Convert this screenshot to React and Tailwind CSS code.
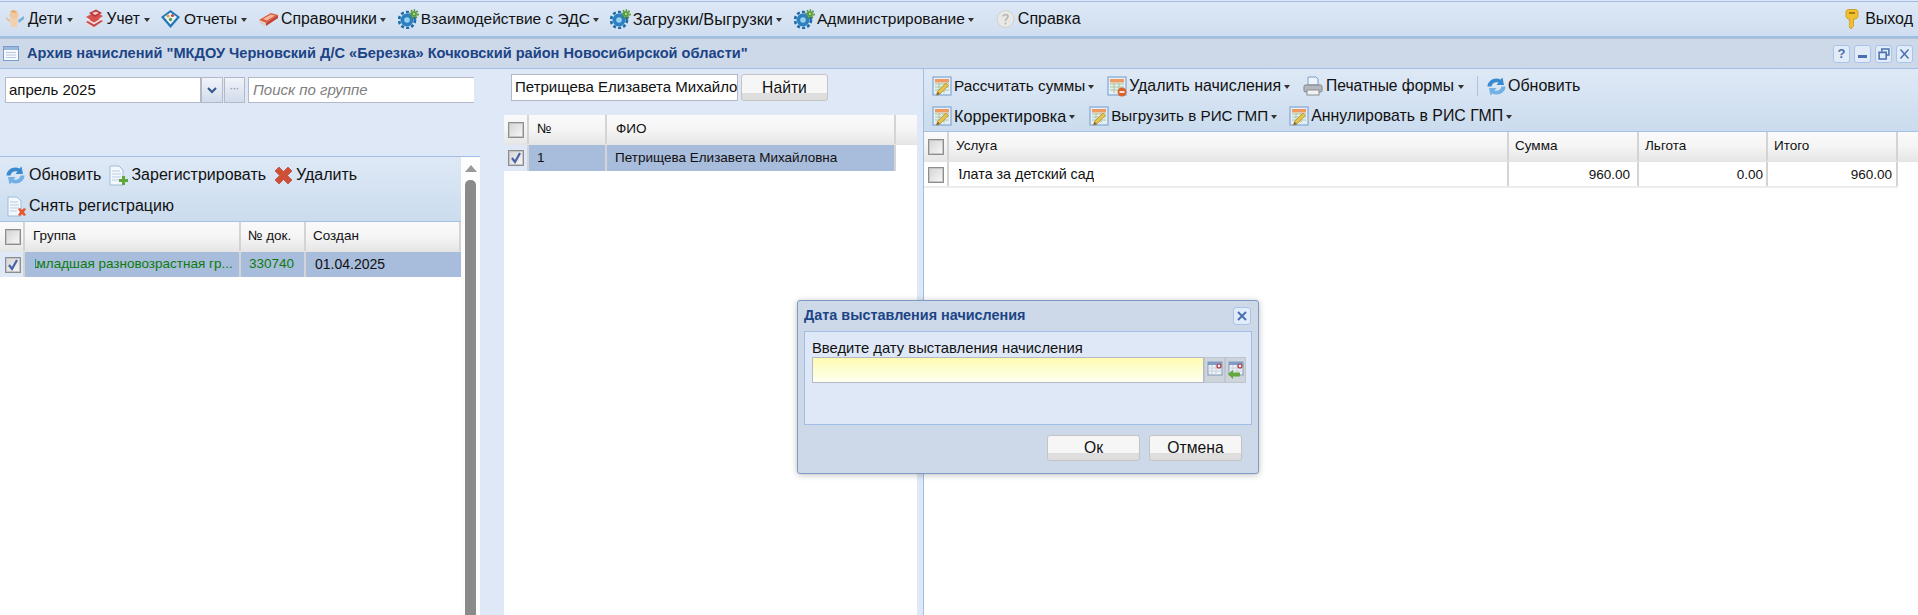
const font = { fontFamily: '"Liberation Sans", Arial, sans-serif' };

// --- icons ---
function KidIcon() {
  return (
    <svg width="20" height="20" viewBox="0 0 20 20" className="shrink-0">
      <circle cx="9" cy="6" r="4.5" fill="#f0c8a0" />
      <path d="M5 2.5 L8 1 L12 2.5 L10 4 Z" fill="#e8a868" />
      <path d="M5 11 C6 9 12 9 13 11 L12 18 L6 18 Z" fill="#f2cfae" />
      <path d="M13 11 L19 7 L19 10 L14 14 Z" fill="#7fb0dc" />
      <path d="M1 8 L5 11 L5 13 L1 10 Z" fill="#e5b98f" />
    </svg>
  );
}
function BooksIcon() {
  return (
    <svg width="20" height="20" viewBox="0 0 20 20" className="shrink-0">
      <path d="M2 13 L11 8 L19 12 L10 18 Z" fill="#c84848" />
      <path d="M2 14 L10 18.5 L10 20 L2 16 Z" fill="#f0d8d8" />
      <path d="M2 8 L11 3 L19 7 L10 13 Z" fill="#d85050" />
      <path d="M2 9 L10 13.5 L19 8 L19 10 L10 15.5 L2 11 Z" fill="#f3e0e0" />
      <path d="M5 4 L12 0.5 L18 4 L11 8 Z" fill="#b83838" />
      <path d="M8 4 L12 2.5 L15 4 L11 6 Z" fill="#f4c8c8" />
    </svg>
  );
}
function ReportIcon() {
  return (
    <svg width="21" height="20" viewBox="0 0 21 20" className="shrink-0">
      <path d="M10.5 1 L20 8 L10.5 19 L1 8 Z" fill="#1f78b8" />
      <path d="M10.5 3.5 L17 8 L10.5 15.5 L4 8 Z" fill="#eef4fa" />
      <circle cx="8" cy="7" r="1.6" fill="#d8a030" />
      <circle cx="12.5" cy="6.5" r="1.6" fill="#c04848" />
      <circle cx="10.5" cy="10.5" r="1.7" fill="#58a048" />
    </svg>
  );
}
function HandbookIcon() {
  return (
    <svg width="21" height="20" viewBox="0 0 21 20" className="shrink-0">
      <path d="M1 11 L13 4 L20 6 L8 14 Z" fill="#e05a3c" />
      <path d="M5 10 L13 5.5 L17 6.5 L9 11.5 Z" fill="#f5b8a0" />
      <path d="M1 11 L8 14 L8 17 L1 14 Z" fill="#d8d0c8" />
      <path d="M8 14 L20 6 L20 9 L8 17 Z" fill="#c04030" />
    </svg>
  );
}
function GearIcon() {
  return (
    <svg width="21" height="20" viewBox="0 0 21 20" className="shrink-0">
      <circle cx="9" cy="11" r="6.5" fill="#2a80c0" />
      <circle cx="9" cy="11" r="8" fill="none" stroke="#1d6aa8" strokeWidth="2.6" strokeDasharray="3 2.2" />
      <circle cx="9" cy="11" r="2.8" fill="#9ad0ee" />
      <circle cx="16" cy="5" r="3" fill="#5c9e3c" />
      <circle cx="16" cy="5" r="4" fill="none" stroke="#4c8c30" strokeWidth="1.6" strokeDasharray="1.6 1.4" />
      <circle cx="16" cy="5" r="1.1" fill="#c8e4a8" />
    </svg>
  );
}
function HelpIcon() {
  return (
    <svg width="21" height="20" viewBox="0 0 21 20" className="shrink-0">
      <circle cx="10.5" cy="10" r="8.5" fill="#e8e8e6" stroke="#d0d0cc" />
      <path d="M8 7.5 C8 5 13 5 13 7.5 C13 9.5 10.5 9.5 10.5 12" fill="none" stroke="#b8b8b4" strokeWidth="1.7" />
      <circle cx="10.5" cy="14.5" r="1.1" fill="#b8b8b4" />
    </svg>
  );
}
function KeyIcon() {
  return (
    <svg width="14" height="21" viewBox="0 0 14 21" className="shrink-0">
      <path d="M1 2 L3 0.5 L11 0.5 L13 2 L13 8 L11 10 L8.5 10 L8.5 17 L6 20 L4 18 L5 16.5 L4 15 L5 13.5 L4 12 L5 10 L3 10 L1 8 Z" fill="#f0c030" stroke="#c89818" strokeWidth="0.8" />
      <rect x="4" y="3" width="6" height="2" fill="#a87c10" />
    </svg>
  );
}
function RefreshIcon() {
  return (
    <svg width="19" height="19" viewBox="0 0 19 19" className="shrink-0">
      <path d="M0.5 9.5 C0.5 3.5 8 -0.5 13.5 2.5 L15.5 0.5 L17 8 L9.5 8 L11.5 5.5 C8.5 4.5 5 6 4.5 9.5 Z" fill="#3a8ad0" />
      <path d="M18.5 9.5 C18.5 15.5 11 19.5 5.5 16.5 L3.5 18.5 L2 11 L9.5 11 L7.5 13.5 C10.5 14.5 14 13 14.5 9.5 Z" fill="#72b0e6" />
    </svg>
  );
}
function CalcIcon({ badge }) {
  return (
    <svg width="20" height="21" viewBox="0 0 20 21" className="shrink-0">
      <rect x="1" y="1" width="18" height="18" fill="#e6eef8" stroke="#8fb0d8" strokeWidth="1.4" />
      <rect x="3" y="3" width="14" height="3.5" fill="#ee9a60" />
      <path d="M3 8 H17 M3 11 H17 M3 14 H17 M7 7 V17 M12 7 V17" stroke="#a8c898" />
      {badge ? (
        <g>
          <circle cx="15" cy="16" r="4.5" fill="#d8642c" />
          <rect x="12.5" y="15.2" width="5" height="1.6" fill="#fff" />
        </g>
      ) : (
        <g>
          <path d="M5.5 15.5 L14 7 L16.5 9.5 L8 18 L4.5 19 Z" fill="#e6c24c" stroke="#a08628" strokeWidth="0.6" />
          <path d="M4.5 19.5 L5.5 15.5 L8 18 Z" fill="#8a6a30" />
        </g>
      )}
    </svg>
  );
}
function PrinterIcon() {
  return (
    <svg width="20" height="20" viewBox="0 0 20 20" className="shrink-0">
      <path d="M5 1 H13 L15 3 V9 H5 Z" fill="#eef4fb" stroke="#7c9cc4" />
      <rect x="1" y="9" width="18" height="7" rx="1.5" fill="#b4b8be" stroke="#7f8388" />
      <rect x="4" y="14" width="12" height="5" fill="#f2f2f2" stroke="#8a8e94" />
    </svg>
  );
}
function DocIcon({ plus }) {
  return (
    <svg width="21" height="21" viewBox="0 0 21 21" className="shrink-0">
      <path d="M2 1 H11 L15 5 V20 H2 Z" fill="#f4f8fc" stroke="#9cbcdc" />
      <path d="M4 6 H12 M4 9 H13 M4 12 H13 M4 15 H11" stroke="#b8cce0" />
      {plus ? (
        <path d="M14 11 H17 V14 H20 V17 H17 V20 H14 V17 H11 V14 H14 Z" fill="#5ca83c" />
      ) : (
        <path d="M12 13 L14 12 L16 14 L18 12 L20 13 L18 16 L20 19 L18 20 L16 18 L14 20 L12 19 L14 16 Z" fill="#e8542c" />
      )}
    </svg>
  );
}
function DeleteIcon() {
  return (
    <svg width="19" height="19" viewBox="0 0 19 19" className="shrink-0">
      <path d="M1 5 L5 1 L9.5 5.5 L14 1 L18 5 L13.5 9.5 L18 14 L14 18 L9.5 13.5 L5 18 L1 14 L5.5 9.5 Z" fill="#cf4f37" stroke="#b03c28" strokeWidth="0.6" />
    </svg>
  );
}
function WindowIcon() {
  return (
    <svg width="16" height="15" viewBox="0 0 16 15" className="shrink-0">
      <rect x="0.5" y="0.5" width="15" height="14" fill="#f6f9fd" stroke="#7e9cc8" />
      <rect x="1" y="1" width="14" height="3" fill="#9ab8de" />
      <path d="M3 6.5 H13 M3 9 H13 M3 11.5 H13" stroke="#b8c8dc" />
    </svg>
  );
}
function CalIcon({ arrow }) {
  return (
    <svg width="18" height="20" viewBox="0 0 18 20">
      <rect x="2" y="2" width="14" height="13" fill="#eef2f8" stroke="#8098b8" />
      <rect x="2" y="2" width="14" height="3" fill="#7f9cc4" />
      <path d="M2 8 H16 M2 11 H16 M6 5 V15 M10 5 V15" stroke="#c8d0dc" />
      <circle cx="13" cy="6" r="2" fill="#f4f4f4" stroke="#b03038" strokeWidth="1.2" />
      {arrow && <path d="M1 14 L6 10 L6 12.5 L13 12.5 L13 16.5 L6 16.5 L6 19 Z" fill="#62a83c" />}
    </svg>
  );
}

// --- small parts ---
function Caret() {
  return <span className="ml-[3px] mt-[1px] w-0 h-0 border-x-[3.5px] border-x-transparent border-t-[4px] border-t-[#333]" />;
}
function Tool({ icon, label, caret, size = "text-[15.7px]", className = "" }) {
  return (
    <div className={`flex items-center h-[24px] shrink-0 whitespace-nowrap text-[#111] ${size} ${className}`}>
      {icon}
      <span className="ml-[2px]">{label}</span>
      {caret && <Caret />}
    </div>
  );
}
function Check({ checked }) {
  return (
    <div className="w-[16px] h-[16px] border border-[#8d8d8d] shadow-[inset_0_0_0_1px_#c6c6c6] bg-gradient-to-br from-[#d4d4d4] to-[#f8f8f8] flex items-center justify-center">
      {checked && (
        <svg width="12" height="12" viewBox="0 0 12 12">
          <path d="M2 6 L5 10 L10 1" fill="none" stroke="#4a62a8" strokeWidth="2.2" />
        </svg>
      )}
    </div>
  );
}
function HeadCell({ className = "", children }) {
  return (
    <div className={`h-full flex items-center shrink-0 border-r-2 border-[#d4d4d4] overflow-hidden whitespace-nowrap ${className}`}>
      {children}
    </div>
  );
}
function Header({ children }) {
  return (
    <div className="flex h-[30px] text-[13.5px] text-[#111] bg-gradient-to-b from-[#fafafa] via-[#f5f5f5] to-[#e6e6e6] border-b border-[#e4e4e4]">
      {children}
    </div>
  );
}
function GrayButton({ className = "", children }) {
  return (
    <div className={`flex items-center justify-center rounded-[3px] border border-[#c4c4c4] text-[15.7px] text-[#111] bg-gradient-to-b from-[#f6f6f6] from-70% to-[#dedede] to-70% ${className}`}>
      {children}
    </div>
  );
}
function WinBtn({ children }) {
  return (
    <div className="w-[17px] h-[18px] rounded-[3px] border border-[#a9c4ea] bg-[#e2ecf9] flex items-center justify-center text-[13px] font-bold leading-none text-[#4a6fb0]">
      {children}
    </div>
  );
}

export default function App() {
  return (
    <div className="relative w-[1918px] h-[615px] overflow-hidden flex flex-col bg-[#dfe8f6]" style={font}>
      {/* top menu */}
      <div className="h-[35px] shrink-0 mt-[1px] border-t border-[#9fbce6] flex items-center bg-gradient-to-b from-[#dde8f6] to-[#cfdeef] pl-[5px]">
        <Tool icon={<KidIcon />} label="Дети" caret size="text-[15.6px]" className="gap-[1px]" />
        <Tool icon={<BooksIcon />} label="Учет" caret size="text-[15.6px]" className="ml-[11px] gap-[1px]" />
        <Tool icon={<ReportIcon />} label="Отчеты" caret size="text-[15.4px]" className="ml-[10px] gap-[1px]" />
        <Tool icon={<HandbookIcon />} label="Справочники" caret size="text-[15.8px]" className="ml-[11px]" />
        <Tool icon={<GearIcon />} label="Взаимодействие с ЭДС" caret size="text-[15.5px]" className="ml-[12px]" />
        <Tool icon={<GearIcon />} label="Загрузки/Выгрузки" caret size="text-[16.4px]" className="ml-[11px]" />
        <Tool icon={<GearIcon />} label="Администрирование" caret size="text-[15.5px]" className="ml-[12px]" />
        <Tool icon={<HelpIcon />} label="Справка" size="text-[16px]" className="ml-[21px]" />
        <Tool icon={<KeyIcon />} label="Выход" size="text-[16px]" className="ml-auto mr-[5px] gap-[4px]" />
      </div>
      <div className="h-[2px] shrink-0 bg-[#9fbfe6]" />

      {/* window title */}
      <div className="h-[30px] shrink-0 bg-[#cdd9e8] border-t border-[#b4c0cf] flex items-center pl-[3px] pr-[5px]">
        <WindowIcon />
        <span className="ml-[8px] text-[14.6px] font-bold text-[#1c4486]">
          Архив начислений "МКДОУ Черновский Д/С «Березка» Кочковский район Новосибирской области"
        </span>
        <div className="ml-auto flex gap-[4px]">
          <WinBtn>?</WinBtn>
          <WinBtn>
            <div className="w-[9px] h-[3px] mt-[5px] bg-[#4a6fb0]" />
          </WinBtn>
          <WinBtn>
            <svg width="12" height="12" viewBox="0 0 11 11">
              <path d="M3.5 3 V1 H10 V6.5 H8 M1 4 H7.5 V10 H1 Z" fill="none" stroke="#4a6fb0" strokeWidth="1.4" />
            </svg>
          </WinBtn>
          <WinBtn>
            <svg width="11" height="12" viewBox="0 0 11 11">
              <path d="M1.5 1 L9.5 10 M9.5 1 L1.5 10" stroke="#4a6fb0" strokeWidth="1.5" />
            </svg>
          </WinBtn>
        </div>
      </div>
      <div className="h-[1px] shrink-0 bg-[#9fbfe6]" />

      {/* panels */}
      <div className="flex flex-1 min-h-0">
        {/* left */}
        <div className="w-[480px] shrink-0 flex flex-col">
          <div className="h-[87px] shrink-0 pt-[8px] pl-[5px] pr-[6px]">
            <div className="flex items-start overflow-hidden">
              <div className="w-[196px] h-[26px] shrink-0 bg-white border border-[#b5b8c8] flex items-center pl-[3px] text-[15px] text-[#111]">апрель 2025</div>
              <div className="w-[22px] h-[26px] shrink-0 border border-[#b5b8c8] bg-gradient-to-b from-[#f0f4fa] to-[#d2dcea] flex items-center justify-center">
                <svg width="10" height="7" viewBox="0 0 10 7">
                  <path d="M1 1 L5 5 L9 1" fill="none" stroke="#33568e" strokeWidth="2" />
                </svg>
              </div>
              <div className="ml-[1px] w-[21px] h-[26px] shrink-0 border border-[#b5b8c8] bg-gradient-to-b from-[#f0f4fa] to-[#d2dcea] flex items-center justify-center text-[9px] text-[#8a9ab2] font-bold">···</div>
              <div className="ml-[3px] w-[240px] h-[26px] shrink-0 bg-white border border-[#b5b8c8] flex items-center pl-[4px] text-[15px] italic text-[#808080]">Поиск по группе</div>
            </div>
          </div>
          <div className="h-[1px] shrink-0 bg-[#9fbfe6]" />
          <div className="flex flex-1 min-h-0">
            <div className="w-[461px] shrink-0 flex flex-col bg-white">
              <div className="h-[65px] shrink-0 border-b border-[#a4c0e4] bg-gradient-to-b from-[#dfe9f6] to-[#cadcee] pl-[6px] pt-[6px]">
                <div className="flex items-center">
                  <Tool icon={<RefreshIcon />} label="Обновить" size="text-[16px]" className="gap-[2px]" />
                  <Tool icon={<DocIcon plus />} label="Зарегистрировать" size="text-[16px]" className="ml-[7px]" />
                  <Tool icon={<DeleteIcon />} label="Удалить" size="text-[16px]" className="ml-[8px] gap-[1px]" />
                </div>
                <div className="flex items-center mt-[7px]">
                  <Tool icon={<DocIcon />} label="Снять регистрацию" size="text-[16px]" />
                </div>
              </div>
              <Header>
                <HeadCell className="w-[25px] justify-end pr-[2px]"><Check /></HeadCell>
                <HeadCell className="w-[216px] pl-[8px]">Группа</HeadCell>
                <HeadCell className="w-[65px] pl-[7px]">№ док.</HeadCell>
                <HeadCell className="w-[155px] pl-[7px] border-r-0">Создан</HeadCell>
              </Header>
              <div className="flex h-[25px] items-center text-[13.5px] bg-[#a8bcdb]">
                <div className="w-[25px] h-full shrink-0 flex items-center justify-end pr-[2px] bg-[#dfe8f6] border-r-2 border-[#d4d4d4]"><Check checked /></div>
                <div className="w-[216px] h-full shrink-0 flex items-center pl-[10px] text-[#0d7a0d] border-r-2 border-[#d4d4d4]">
                  <div className="overflow-hidden whitespace-nowrap">
                    <span className="-ml-[4px]">1</span>
                    <span className="-ml-[2px]">младшая разновозрастная гр...</span>
                  </div>
                </div>
                <div className="w-[65px] h-full shrink-0 flex items-center pl-[8px] text-[#0d7a0d] border-r-2 border-[#d4d4d4]">330740</div>
                <div className="flex-1 pl-[9px] text-[14px] text-[#111]">01.04.2025</div>
              </div>
            </div>
            <div className="w-[19px] shrink-0 bg-[#fdfdfd] flex flex-col items-center pt-[8px]">
              <div className="w-0 h-0 border-x-[6px] border-x-transparent border-b-[7px] border-b-[#9a9a9a]" />
              <div className="mt-[8px] flex-1 w-[11px] rounded-t-[5px] bg-[#8a8a8a]" />
            </div>
          </div>
        </div>

        <div className="w-[24px] shrink-0" />

        {/* middle */}
        <div className="w-[413px] shrink-0 flex flex-col">
          <div className="h-[46px] shrink-0 flex items-start pt-[5px] pl-[7px]">
            <div className="w-[227px] h-[27px] bg-white border border-[#b5b8c8] flex items-center pl-[3px] overflow-hidden whitespace-nowrap text-[15px] text-[#111]">Петрищева Елизавета Михайло</div>
            <GrayButton className="ml-[3px] w-[87px] h-[27px]">Найти</GrayButton>
          </div>
          <div className="flex-1 bg-white">
            <Header>
              <HeadCell className="w-[25px] justify-center"><Check /></HeadCell>
              <HeadCell className="w-[78px] pl-[8px]">№</HeadCell>
              <HeadCell className="w-[289px] pl-[9px]">ФИО</HeadCell>
            </Header>
            <div className="flex h-[26px] w-[392px] items-center text-[13.5px] text-[#111] bg-[#a8bcdb]">
              <div className="w-[25px] h-full shrink-0 flex items-center justify-center bg-[#dfe8f6] border-r-2 border-[#d4d4d4]"><Check checked /></div>
              <div className="w-[78px] h-full shrink-0 flex items-center pl-[8px] border-r-2 border-[#d4d4d4]">1</div>
              <div className="flex-1 h-full flex items-center pl-[8px] border-r-2 border-[#d4d4d4]">Петрищева Елизавета Михайловна</div>
            </div>
          </div>
        </div>

        <div className="w-[6px] shrink-0" />
        <div className="w-[1px] shrink-0 bg-[#9fbfe6]" />

        {/* right */}
        <div className="flex-1 min-w-0 flex flex-col bg-white">
          <div className="h-[63px] shrink-0 border-b border-[#a4c0e4] bg-gradient-to-b from-[#dfe9f6] to-[#cadcee] pl-[8px] pt-[5px]">
            <div className="flex items-center">
              <Tool icon={<CalcIcon />} label="Рассчитать суммы" caret size="text-[15.3px]" />
              <Tool icon={<CalcIcon badge />} label="Удалить начисления" caret size="text-[15.9px]" className="ml-[13px]" />
              <Tool icon={<PrinterIcon />} label="Печатные формы" caret size="text-[15.6px]" className="ml-[13px] gap-[1px]" />
              <div className="ml-[13px] w-[1px] h-[20px] bg-[#aac4e4]" />
              <Tool icon={<RefreshIcon />} label="Обновить" size="text-[16px]" className="ml-[9px]" />
            </div>
            <div className="flex items-center mt-[6px]">
              <Tool icon={<CalcIcon />} label="Корректировка" caret size="text-[16.2px]" />
              <Tool icon={<CalcIcon />} label="Выгрузить в РИС ГМП" caret size="text-[15.2px]" className="ml-[14px]" />
              <Tool icon={<CalcIcon />} label="Аннулировать в РИС ГМП" caret size="text-[15.9px]" className="ml-[12px]" />
            </div>
          </div>
          <Header>
            <HeadCell className="w-[25px] justify-center"><Check /></HeadCell>
            <HeadCell className="w-[560px] pl-[7px]">Услуга</HeadCell>
            <HeadCell className="w-[130px] pl-[6px]">Сумма</HeadCell>
            <HeadCell className="w-[129px] pl-[6px]">Льгота</HeadCell>
            <HeadCell className="w-[130px] pl-[6px]">Итого</HeadCell>
          </Header>
          <div className="flex h-[26px] w-[974px] items-center text-[13.5px] text-[#111] border-b-2 border-[#ececec]">
            <div className="w-[25px] h-full shrink-0 flex items-center justify-center pt-[2px] border-r-2 border-[#d4d4d4]"><Check /></div>
            <div className="w-[560px] h-full shrink-0 flex items-center pt-[2px] pl-[10px] text-[14.3px] border-r-2 border-[#d4d4d4]">
              <div className="overflow-hidden whitespace-nowrap">
                <span className="-ml-[7px]">Плата за детский сад</span>
              </div>
            </div>
            <div className="w-[130px] h-full shrink-0 flex items-center justify-end pt-[2px] pr-[7px] border-r-2 border-[#d4d4d4]">960.00</div>
            <div className="w-[129px] h-full shrink-0 flex items-center justify-end pt-[2px] pr-[3px] border-r-2 border-[#d4d4d4]">0.00</div>
            <div className="w-[130px] h-full shrink-0 flex items-center justify-end pt-[2px] pr-[4px] border-r-2 border-[#d4d4d4]">960.00</div>
          </div>
        </div>
      </div>

      {/* modal dialog */}
      <div className="absolute left-[797px] top-[300px] w-[462px] h-[174px] bg-[#cdd9e8] border border-[#7f9ac0] rounded-[3px] shadow-[0_1px_6px_rgba(0,0,0,0.25)] flex flex-col px-[6px]">
        <div className="h-[30px] shrink-0 flex items-center justify-between">
          <span className="text-[14.4px] font-bold text-[#1c4486]">Дата выставления начисления</span>
          <div className="w-[18px] h-[18px] mr-[1px] rounded-[3px] border border-[#a9c4ea] bg-[#e2ecf9] flex items-center justify-center">
            <svg width="12" height="12" viewBox="0 0 12 12">
              <path d="M2 2 L10 10 M10 2 L2 10" stroke="#4a6fb0" strokeWidth="2" />
            </svg>
          </div>
        </div>
        <div className="h-[94px] shrink-0 bg-[#dfe8f6] border border-[#9fbfe6] pl-[7px] pt-[8px]">
          <div className="text-[14.8px] leading-[17px] text-[#111]">Введите дату выставления начисления</div>
          <div className="flex h-[26px]">
            <div className="w-[392px] border border-[#b5b8c8] bg-gradient-to-b from-[#fdfcb0] to-[#fffff0]" />
            <div className="w-[21px] bg-[#ced4dc] border border-[#c0c6d0] flex items-center justify-center"><CalIcon /></div>
            <div className="w-[21px] bg-[#ced4dc] border border-[#c0c6d0] flex items-center justify-center"><CalIcon arrow /></div>
          </div>
        </div>
        <div className="flex justify-end gap-[9px] pt-[10px] pr-[10px]">
          <GrayButton className="w-[93px] h-[26px]">Ок</GrayButton>
          <GrayButton className="w-[93px] h-[26px]">Отмена</GrayButton>
        </div>
      </div>
    </div>
  );
}
